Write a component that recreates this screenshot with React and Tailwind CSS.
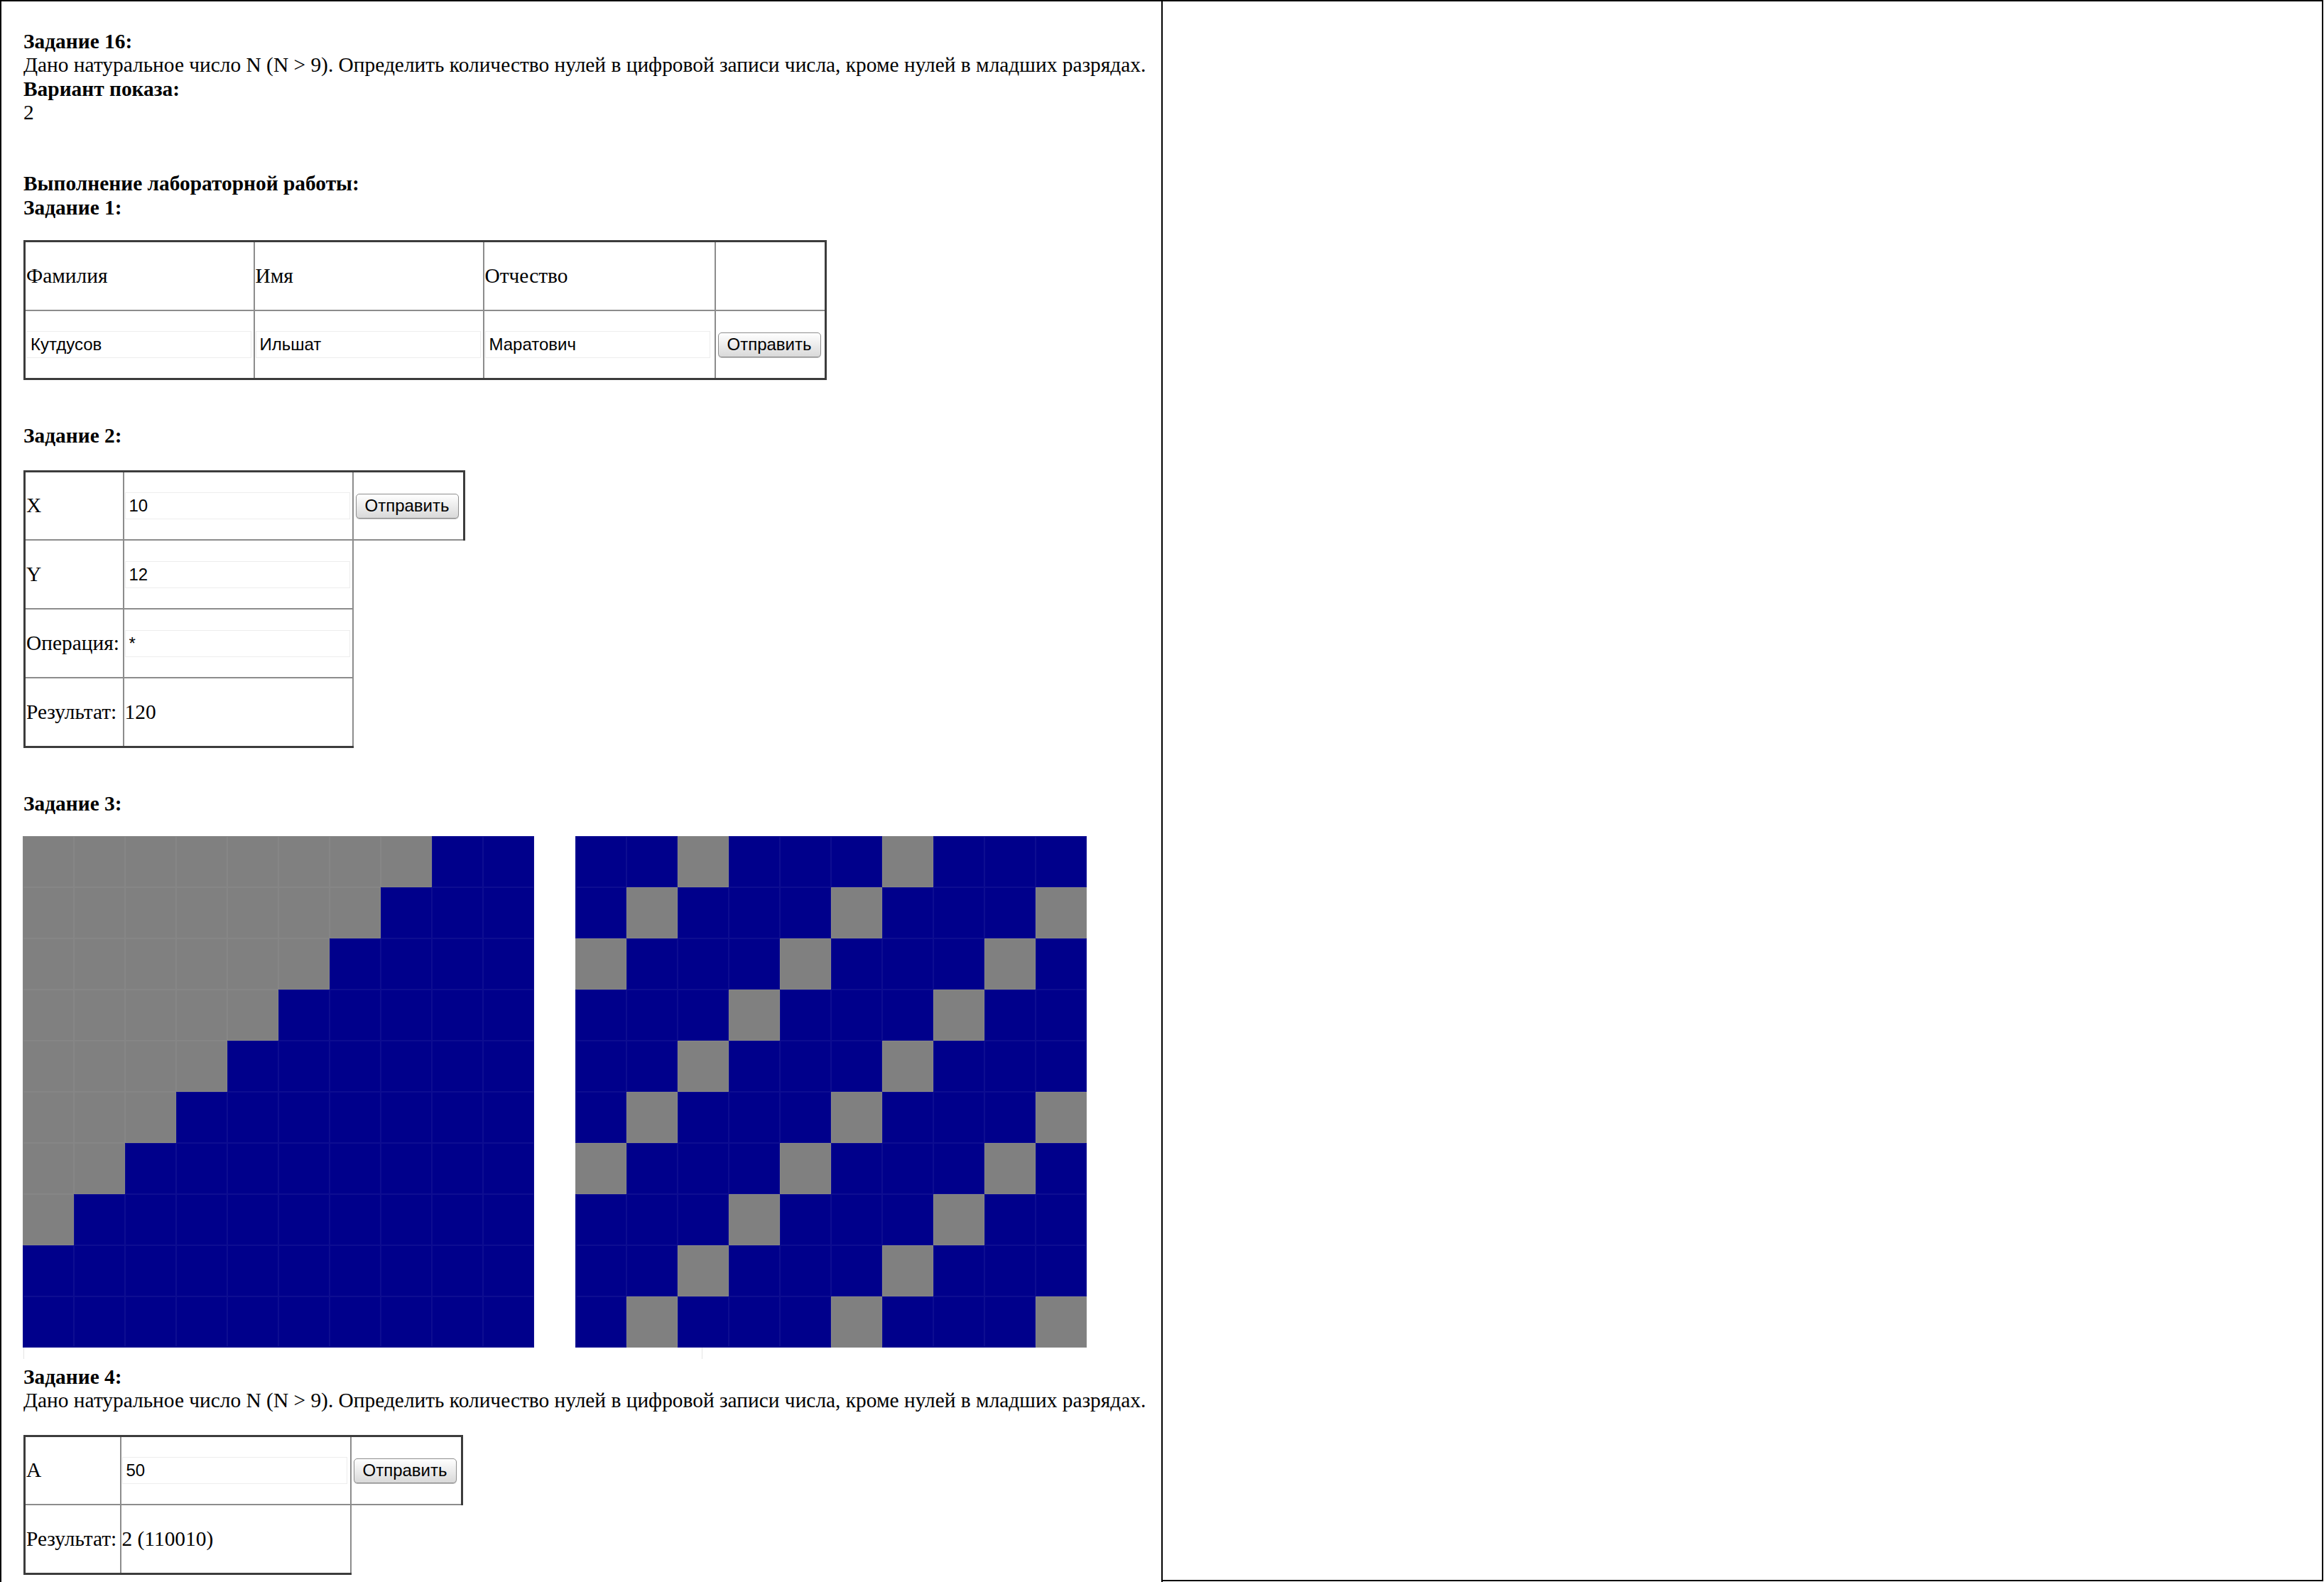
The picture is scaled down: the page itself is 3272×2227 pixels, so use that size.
import React from 'react';

const serif = "font-['Liberation_Serif','Times_New_Roman',serif]";
const sans = "font-['Liberation_Sans',Arial,sans-serif]";

const task =
  'Дано натуральное число N (N > 9). Определить количество нулей в цифровой записи числа, кроме нулей в младших разрядах.';

const Field = ({ value, w = 'w-[317px]' }) => (
  <input
    type="text"
    defaultValue={value}
    readOnly
    className={`${sans} ${w} h-[38px] border border-[#ededed] bg-white px-[5px] text-[24px] text-black outline-none`}
  />
);

const SendButton = () => (
  <button
    className={`${sans} ml-[2px] h-[35px] w-[145px] rounded-[5px] border-[1.5px] border-[#8d8d8d] bg-linear-to-b from-white to-[#d9d9d9] text-[24px] leading-none text-black shadow-[0_1px_0_#bdbdbd]`}
  >
    Отправить
  </button>
);

// table cell: gray inner lines, darker edge where the cell touches the table's outline
const Td = ({ t, l, r, b, className = '', children }) => (
  <td
    className={[
      'h-[97px] border-2 border-[#8c8c8c] px-[1px] align-middle',
      t && 'border-t-[3px] border-t-[#3c3c3c]',
      l && 'border-l-[3px] border-l-[#3c3c3c]',
      r && 'border-r-[3px] border-r-[#3c3c3c]',
      b && 'border-b-[3px] border-b-[#3c3c3c]',
      className,
    ]
      .filter(Boolean)
      .join(' ')}
  >
    {children}
  </td>
);

const Grid = ({ isGray }) => (
  <div className="grid w-[720px] grid-cols-10">
    {Array.from({ length: 100 }, (_, i) => {
      const r = Math.floor(i / 10);
      const c = i % 10;
      return (
        <div
          key={i}
          className={`h-[72px] border border-white/5 ${isGray(r, c) ? 'bg-[#808080]' : 'bg-[#00008b]'}`}
        />
      );
    })}
  </div>
);

export default function App() {
  return (
    <div className={`${serif} flex h-[2227px] w-[3271px] bg-white text-[29.4px] leading-[33.4px] text-black`}>
      {/* left frame */}
      <div className="h-[2227px] w-[1637px] overflow-hidden border-t-2 border-r-2 border-l-2 border-black pt-[40px] pl-[31px]">
        <div className="font-bold">Задание 16:</div>
        <div>{task}</div>
        <div className="font-bold">Вариант показа:</div>
        <div>2</div>
        <div className="h-[66.8px]" />
        <div className="font-bold">Выполнение лабораторной работы:</div>
        <div className="font-bold">Задание 1:</div>

        {/* Задание 1 */}
        <table className="mt-[29px] border-collapse">
          <tbody>
            <tr>
              <Td t l className="w-[323px]">Фамилия</Td>
              <Td t className="w-[323px]">Имя</Td>
              <Td t className="w-[326px]">Отчество</Td>
              <Td t r className="w-[156px]"></Td>
            </tr>
            <tr>
              <Td l b><Field value="Кутдусов" /></Td>
              <Td b><Field value="Ильшат" /></Td>
              <Td b><Field value="Маратович" /></Td>
              <Td r b><SendButton /></Td>
            </tr>
          </tbody>
        </table>

        {/* Задание 2 */}
        <div className="mt-[62px] font-bold">Задание 2:</div>
        <table className="mt-[31px] border-collapse">
          <tbody>
            <tr>
              <Td t l className="w-[139px]">X</Td>
              <Td t className="w-[323px]"><Field value="10" /></Td>
              <Td t r className="w-[157px]"><SendButton /></Td>
            </tr>
            <tr>
              <Td l>Y</Td>
              <Td><Field value="12" /></Td>
            </tr>
            <tr>
              <Td l>Операция:</Td>
              <Td><Field value="*" /></Td>
            </tr>
            <tr>
              <Td l b>Результат:</Td>
              <Td b>120</Td>
            </tr>
          </tbody>
        </table>

        {/* Задание 3 */}
        <div className="mt-[62px] font-bold">Задание 3:</div>
        <div className="mt-[29px] -ml-[1px] flex gap-[58px]">
          <Grid isGray={(r, c) => r + c < 8} />
          <Grid isGray={(r, c) => (r + c) % 4 === 2} />
        </div>
        <div className="h-[16px] w-[956px] border-r border-l border-[#e4e4e4]" />

        {/* Задание 4 */}
        <div className="mt-[9px] font-bold">Задание 4:</div>
        <div>{task}</div>
        <table className="mt-[31px] border-collapse">
          <tbody>
            <tr>
              <Td t l className="w-[135px]">A</Td>
              <Td t className="w-[324px]"><Field value="50" /></Td>
              <Td t r className="w-[157px]"><SendButton /></Td>
            </tr>
            <tr>
              <Td l b>Результат:</Td>
              <Td b>2 (110010)</Td>
            </tr>
          </tbody>
        </table>
      </div>

      {/* right frame */}
      <div className="h-[2226px] flex-1 border-t-2 border-r-2 border-b-2 border-black" />
    </div>
  );
}
